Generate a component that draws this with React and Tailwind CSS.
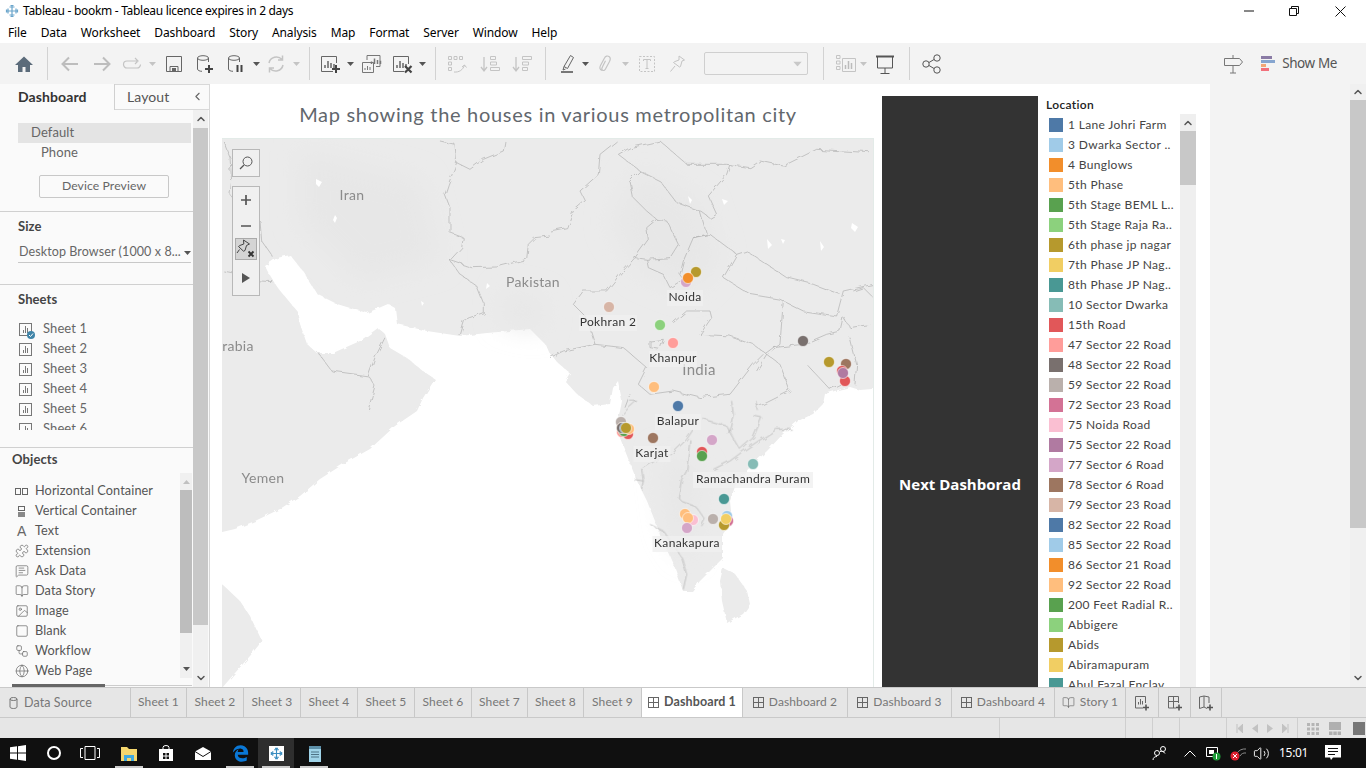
import {
  BookOpen, ChevronDown, ChevronLeft, ChevronUp, Globe, Image, MessageSquareText, Puzzle, Square, Volume2, Workflow,
} from 'lucide-react';
import { FaEdgeLegacy } from 'react-icons/fa6';

const MENU = ['File', 'Data', 'Worksheet', 'Dashboard', 'Story', 'Analysis', 'Map', 'Format', 'Server', 'Window', 'Help'];

const LEGEND = [
  ['1 Lane Johri Farm', '#4e79a7'],
  ['3 Dwarka Sector ..', '#a0cbe8'],
  ['4 Bunglows', '#f28e2b'],
  ['5th Phase', '#ffbe7d'],
  ['5th Stage BEML L..', '#59a14f'],
  ['5th Stage Raja Ra..', '#8cd17d'],
  ['6th phase jp nagar', '#b6992d'],
  ['7th Phase JP Nag..', '#f1ce63'],
  ['8th Phase JP Nag..', '#499894'],
  ['10 Sector Dwarka', '#86bcb6'],
  ['15th Road', '#e15759'],
  ['47 Sector 22 Road', '#ff9d9a'],
  ['48 Sector 22 Road', '#79706e'],
  ['59 Sector 22 Road', '#bab0ac'],
  ['72 Sector 23 Road', '#d37295'],
  ['75 Noida Road', '#fabfd2'],
  ['75 Sector 22 Road', '#b07aa1'],
  ['77 Sector 6 Road', '#d4a6c8'],
  ['78 Sector 6 Road', '#9d7660'],
  ['79 Sector 23 Road', '#d7b5a6'],
  ['82 Sector 22 Road', '#4e79a7'],
  ['85 Sector 22 Road', '#a0cbe8'],
  ['86 Sector 21 Road', '#f28e2b'],
  ['92 Sector 22 Road', '#ffbe7d'],
  ['200 Feet Radial R..', '#59a14f'],
  ['Abbigere', '#8cd17d'],
  ['Abids', '#b6992d'],
  ['Abiramapuram', '#f1ce63'],
  ['Abul Fazal Enclav..', '#499894'],
];

// page coordinates of the marks, drawn back to front
const DOTS = [
  [696, 271, '#b6992d'], [686, 281, '#d4a6c8'], [688, 277, '#f28e2b'],
  [609, 306, '#d7b5a6'], [660, 324, '#8cd17d'], [673, 342, '#ff9d9a'], [654, 386, '#ffbe7d'], [678, 405, '#4e79a7'],
  [803, 340, '#79706e'], [829, 361, '#b6992d'], [846, 363, '#9d7660'], [845, 380, '#e15759'], [842, 370, '#e15759'], [843, 372, '#b07aa1'],
  [621, 421, '#bab0ac'], [622, 431, '#ff9d9a'], [628, 433, '#e15759'], [624, 430, '#59a14f'], [622, 427, '#f28e2b'], [622, 427, '#79706e'], [625, 427, '#4e79a7'], [629, 428, '#ffbe7d'], [626, 427, '#b6992d'],
  [653, 437, '#9d7660'], [712, 439, '#d4a6c8'], [702, 451, '#e15759'], [702, 455, '#59a14f'], [753, 463, '#86bcb6'], [724, 498, '#499894'],
  [693, 519, '#fabfd2'], [685, 513, '#ffbe7d'], [688, 517, '#ffbe7d'], [687, 527, '#d4a6c8'], [713, 518, '#bab0ac'],
  [727, 515, '#a0cbe8'], [728, 520, '#d37295'], [724, 524, '#b6992d'], [726, 518, '#f1ce63'],
];

const LABELS = [
  ['Noida', 685, 297, 36], ['Pokhran 2', 608, 322, 58], ['Khanpur', 673, 358, 48], ['Balapur', 678, 421, 46],
  ['Karjat', 652, 453, 37], ['Ramachandra Puram', 753, 479, 120], ['Kanakapura', 687, 543, 69],
];

const SHEET_TABS = [
  ['Sheet 1', 'w-[56px]'], ['Sheet 2', 'w-[57px]'], ['Sheet 3', 'w-[57px]'], ['Sheet 4', 'w-[57px]'], ['Sheet 5', 'w-[57px]'],
  ['Sheet 6', 'w-[57px]'], ['Sheet 7', 'w-[56px]'], ['Sheet 8', 'w-[56px]'], ['Sheet 9', 'w-[58px]'],
];

function Ico({ children, className = '', w = 22, h = 22 }) {
  return (
    <svg width={w} height={h} viewBox={`0 0 ${w} ${h}`} fill="none" className={`shrink-0 ${className}`}>
      {children}
    </svg>
  );
}

function Caret({ className = '', color = '#555' }) {
  return (
    <svg width="7" height="4" viewBox="0 0 7 4" className={`shrink-0 ${className}`}>
      <path d="M0 0h7L3.5 4z" fill={color} />
    </svg>
  );
}

function Sep({ className = '' }) {
  return <div className={`w-px h-[33px] bg-[#d2d2d2] shrink-0 ${className}`} />;
}

function Plus({ x = 15, y = 16 }) {
  return <path d={`M${x - 4} ${y}h8M${x} ${y - 4}v8`} stroke="#444" strokeWidth="2" />;
}

function Cylinder({ c = '#666' }) {
  return (
    <>
      <ellipse cx="9" cy="5" rx="5.5" ry="2.3" stroke={c} />
      <path d="M3.5 5v11c0 1.3 2 2.300 4.500 2.300M14.500 5v4" stroke={c} />
    </>
  );
}

function Bars({ c = '#666', x = 5, y = 14, s = 1 }) {
  return <path d={`M${x} ${y}v${-3 * s}M${x + 3} ${y}v${-7 * s}M${x + 6} ${y}v${-5 * s}M${x + 9} ${y}v${-4 * s}`} stroke={c} strokeWidth="1.500" />;
}

function Toolbar() {
  const off = '#c4c4c4';
  return (
    <div className="h-[41px] bg-[#f3f3f3] flex items-center pl-[13px] shrink-0">
      <Ico><path d="M11 3.500 2 12h3v7h4.500v-5h3v5H17v-7h3z" fill="#5b6b7a" /></Ico>
      <Sep className="ml-[12px]" />
      <Ico className="ml-[11px]"><path d="M19 11H4M10 4.500 3.500 11l6.500 6.500" stroke="#bdbdbd" strokeWidth="2" /></Ico>
      <Ico className="ml-[10px]"><path d="M3 11h15M12 4.500l6.500 6.500-6.500 6.500" stroke="#bdbdbd" strokeWidth="2" /></Ico>
      <Ico className="ml-[8px]"><path d="M16 8H6a3.500 3.500 0 0 0 0 7h10a3.500 3.500 0 0 0 3.500-3.500M14 5l3 3-3 3" stroke={off} strokeWidth="1.200" /></Ico>
      <Caret className="ml-[6px]" color="#c4c4c4" />
      <Ico className="ml-[7px]"><path d="M3.500 3.500h15v15h-15zM7 18.500v-5h8v5" stroke="#666" /><path d="M9 15h4v3.500H9z" fill="#666" /></Ico>
      <Ico className="ml-[9px]"><Cylinder /><Plus x={15} y={16} /></Ico>
      <Ico className="ml-[9px]"><Cylinder /><path d="M12.500 12v7M16.500 12v7" stroke="#444" strokeWidth="2" /></Ico>
      <Caret className="ml-[6px]" />
      <Ico className="ml-[5px]"><path d="M4 10a7.500 7.500 0 0 1 13-3.500M18 12a7.500 7.500 0 0 1-13 3.500M17.500 2.500v4.500H13M4.500 19.500V15H9" stroke={off} strokeWidth="1.500" /></Ico>
      <Caret className="ml-[6px]" color="#c4c4c4" />
      <Sep className="ml-[9px]" />
      <Ico className="ml-[10px]"><path d="M13 18.500H1.500v-15h15V10" stroke="#666" /><Bars x={5} y={15} /><Plus x={16} y={16} /></Ico>
      <Caret className="ml-[5px]" />
      <Ico className="ml-[6px]"><path d="M7 7V2.500h13v11h-4" stroke="#777" /><path d="M2.500 9.500h11v10h-11z" stroke="#777" fill="#f3f3f3" /><Bars x={11.500} y={11} c="#777" s={0.8} /><path d="M5 17v-2M7.500 17v-4M10 17v-3" stroke="#777" /></Ico>
      <Ico className="ml-[10px]"><path d="M12 18.500H1.500v-15h15V11" stroke="#666" /><Bars x={5} y={15} /><path d="M13 13l6.500 6.500M19.500 13 13 19.500" stroke="#444" strokeWidth="2.200" /></Ico>
      <Caret className="ml-[5px]" />
      <Sep className="ml-[9px]" />
      <Ico className="ml-[10px]"><path d="M2.500 3.500h3v3h-3zM8 3.500h3v3H8zM13.500 3.500h3v3h-3zM2.500 9h3v3h-3zM2.500 14.500h3v3h-3z" stroke={off} /><path d="M8 19c5 .5 9-2 10.500-7M18.500 12l2 2.500M18.500 12 16 14" stroke={off} /></Ico>
      <Ico className="ml-[11px]"><path d="M5 4v13M2 14l3 4 3-4" stroke={off} strokeWidth="1.300" /><path d="M11.500 3.500h5v3h-5zM11.500 9h6v3h-6zM11.500 14.500h9v3h-9z" stroke={off} /></Ico>
      <Ico className="ml-[10px]"><path d="M5 4v13M2 14l3 4 3-4" stroke={off} strokeWidth="1.300" /><path d="M11.500 3.500h9v3h-9zM11.500 9h6v3h-6zM11.500 14.500h5v3h-5z" stroke={off} /></Ico>
      <Sep className="ml-[12px]" />
      <Ico className="ml-[11px]"><path d="M13.500 2.500l3 2-6 11-3.500-2zM7 13.500l-1 3.500 2.500-1" stroke="#666" /><path d="M4 19h12" stroke="#777" strokeWidth="2" /></Ico>
      <Caret className="ml-[3px]" />
      <Ico className="ml-[5px]"><path d="M8 17.500c-2.500-1-2.500-3-1.500-5L10.500 5c1-2 3-2.500 4.500-1.500s1.500 3 .5 5l-4 7.500c-.8 1.500-2 1.800-3 1.200s-.8-2 0-3.400l3-6" stroke={off} strokeWidth="1.200" /></Ico>
      <Caret className="ml-[6px]" color="#c4c4c4" />
      <Ico className="ml-[7px]"><path d="M3.500 3.500h15v15h-15z" stroke={off} strokeDasharray="2 1.500" /><path d="M7.500 8V6.500h7V8M11 6.500v9M9.500 15.500h3" stroke={off} /></Ico>
      <Ico className="ml-[8px]"><path d="M13 3l5.500 4-2.500 1-1.500 5.500-1 .5-6-4.500 1-.8 4.500-1.700zM9 13l-4.500 5.500" stroke={off} /></Ico>
      <div className="ml-[16px] w-[104px] h-[23px] border border-[#cfcfcf] rounded-[2px] bg-[#f3f3f3] flex items-center justify-end pr-[3px] shrink-0">
        <Caret color="#c8c8c8" className="scale-125 mr-[3px]" />
      </div>
      <Sep className="ml-[15px]" />
      <Ico className="ml-[11px]"><path d="M1.500 2.500h3.500v3H1.500zM1.500 8h3.500v3H1.500zM1.500 13.500h3.500v3H1.500zM7.500 5.500h13v13h-13z" stroke={off} /><path d="M10.500 16v-4M13.500 16V8M16.500 16v-6" stroke="#bbb" strokeWidth="1.500" /></Ico>
      <Caret className="ml-[3px]" color="#c4c4c4" />
      <Ico className="ml-[7px]"><path d="M2 3.500h18" stroke="#555" strokeWidth="2" /><path d="M3.500 4v11h15V4M11 15v5M6.500 20.500h9" stroke="#555" /></Ico>
      <Sep className="ml-[13px]" />
      <Ico className="ml-[11px]"><circle cx="5" cy="11" r="3.200" stroke="#555" /><circle cx="16" cy="5" r="3.200" stroke="#555" /><circle cx="16" cy="17" r="3.200" stroke="#555" /><path d="M8 9.500l5-3M8 12.500l5 3" stroke="#555" /></Ico>
      <div className="flex-1" />
      <Ico className="translate-x-[1px]"><path d="M2.500 5.500h15l3 3.500-3 3.500h-15zM11 2v3.500M11 12.500V20M8 20h6" stroke="#777" /></Ico>
      <Ico w={15} h={16} className="ml-[18px]">
        <path d="M0 1.500h11" stroke="#8a7ba5" strokeWidth="3" />
        <path d="M0 5.500h14" stroke="#86a5cf" strokeWidth="3" />
        <path d="M0 9.500h5" stroke="#f2a777" strokeWidth="3" />
        <path d="M0 13.500h8" stroke="#f2707b" strokeWidth="3" />
      </Ico>
      <span className="ml-[6px] mr-[29px] text-[13.500px] text-[#555] font-['Noto_Sans',sans-serif] tracking-[-0.4px]">Show Me</span>
    </div>
  );
}

function SheetIcon({ check }) {
  return (
    <span className="relative w-[13px] h-[13px] border border-[#777] shrink-0 flex items-end justify-center gap-[1px] pb-[2px]">
      <span className="w-px h-[3px] bg-[#777]" />
      <span className="w-px h-[7px] bg-[#777]" />
      <span className="w-px h-[5px] bg-[#777]" />
      {check && (
        <span className="absolute -right-[4px] -bottom-[4px] w-[8px] h-[8px] rounded-full bg-[#3f84a8] flex items-center justify-center">
          <Ico w={6} h={6}><path d="M1 3l1.500 1.500L5 1.500" stroke="#fff" /></Ico>
        </span>
      )}
    </span>
  );
}

function Objects() {
  const ic = { size: 14, strokeWidth: 1.2, color: '#666' };
  const rows = [
    ['Horizontal Container', <span className="flex gap-px" key="h"><span className="w-[6px] h-[7px] border border-[#666]" /><span className="w-[6px] h-[7px] border border-[#666]" /></span>],
    ['Vertical Container', <span className="flex flex-col gap-px ml-[3px]" key="v"><span className="w-[7px] h-[5px] border border-[#666]" /><span className="w-[7px] h-[5px] bg-[#888]" /></span>],
    ['Text', <span className="text-[14px] leading-none text-[#666] font-['Liberation_Sans',sans-serif] ml-[2px]" key="t">A</span>],
    ['Extension', <Puzzle {...ic} key="e" />],
    ['Ask Data', <MessageSquareText {...ic} key="a" />],
    ['Data Story', <BookOpen {...ic} key="d" />],
    ['Image', <Image {...ic} key="i" />],
    ['Blank', <Square {...ic} key="b" />],
    ['Workflow', <Workflow {...ic} key="w" />],
    ['Web Page', <Globe {...ic} key="p" />],
  ];
  return (
    <div className="flex h-[205px]">
      <div className="w-[180px] pt-[8px] pl-[15px] text-[12.700px]">
        {rows.map(([name, icon]) => (
          <div key={name} className="h-[20px] flex items-center">
            <span className="w-[20px] flex items-center">{icon}</span>
            <span className="text-[#555]">{name}</span>
          </div>
        ))}
      </div>
      <div className="w-[12px] bg-[#f0f0f0] flex flex-col items-center">
        <div className="h-[17px] flex items-center"><Caret color="#c0c0c0" className="rotate-180" /></div>
        <div className="w-full h-[143px] bg-[#bdbdbd]" />
        <div className="mt-[34px]"><Caret /></div>
      </div>
    </div>
  );
}

function LeftPanel() {
  return (
    <div className="w-[210px] shrink-0 flex flex-col bg-[#fafafa] border-r border-[#d8d8d8] text-[13px] font-['Lato',sans-serif] tracking-[0.1px]">
      <div className="h-[26px] flex shrink-0">
        <div className="w-[115px] pl-[18px] pb-[2px] flex items-center text-[14px] font-bold text-[#333] border-r border-[#d0d0d0]">Dashboard</div>
        <div className="flex-1 flex items-center pl-[12px] pb-[2px] text-[14px] text-[#555] border-b border-t border-[#d8d8d8] justify-between pr-[5px]">
          Layout
          <ChevronLeft size={13} color="#666" />
        </div>
      </div>
      <div className="flex flex-1 min-h-0">
        <div className="w-[193px] pt-[13px] flex flex-col overflow-hidden">
          <div className="ml-[18px] w-[173px] h-[20px] bg-[#e4e4e4] pl-[13px] flex items-center text-[#666]">Default</div>
          <div className="h-[20px] pl-[41px] flex items-center text-[#666]">Phone</div>
          <div className="mt-[12px] ml-[39px] w-[130px] h-[23px] border border-[#c8c8c8] rounded-[2px] flex items-center justify-center text-[12.200px] text-[#666]">Device Preview</div>
          <div className="mt-[13px] h-px bg-[#d0d0d0]" />
          <div className="mt-[6px] h-[18px] ml-[18px] flex items-center font-bold text-[#444]">Size</div>
          <div className="mt-[5px] ml-[18px] w-[173px] h-[22px] pt-[2px] border-b border-[#c8c8c8] flex items-center justify-between pl-[1px] pr-[0px] text-[#666]">
            <span className="text-[12.500px]">Desktop Browser (1000 x 8...</span>
            <Caret />
          </div>
          <div className="mt-[21px] h-px bg-[#d0d0d0] shrink-0" />
          <div className="mt-[6px] h-[18px] ml-[18px] flex items-center font-bold text-[#444] shrink-0">Sheets</div>
          <div className="mt-[10px] h-[111px] overflow-hidden shrink-0 pl-[19px]">
            {['Sheet 1', 'Sheet 2', 'Sheet 3', 'Sheet 4', 'Sheet 5', 'Sheet 6'].map((s, i) => (
              <div key={s} className="h-[20px] flex items-center gap-[11px] text-[#666]">
                <SheetIcon check={i === 0} />
                <span>{s}</span>
              </div>
            ))}
          </div>
          <div className="mt-[17px] h-px bg-[#d0d0d0] shrink-0" />
          <div className="mt-[3px] h-[18px] ml-[12px] flex items-center font-bold text-[#444] shrink-0">Objects</div>
          <div className="mt-[4px] shrink-0"><Objects /></div>
          <div className="mt-[6px] ml-[12px] w-[180px] h-[3px] flex items-center shrink-0">
            <div className="w-[93px] h-[3px] bg-[#666]" />
            <div className="flex-1 h-px bg-[#ccc]" />
          </div>
        </div>
        <div className="w-[15px] bg-[#f0f0f0] flex flex-col items-center">
          <div className="h-[18px] flex items-center"><ChevronUp size={12} strokeWidth={3} color="#555" /></div>
          <div className="w-full h-[497px] bg-[#c8c8c8]" />
          <div className="flex-1" />
          <div className="h-[18px] flex items-center"><ChevronDown size={12} strokeWidth={3} color="#555" /></div>
        </div>
      </div>
    </div>
  );
}

function MapView() {
  const line = { fill: 'none', stroke: '#adadad', strokeWidth: 2, strokeLinejoin: 'round' };
  return (
    <div className="relative flex-1 border-t border-r border-[#e3ebe8] overflow-hidden">
      <svg width="652" height="549" viewBox="222 138 652 549" className="block">
        <defs>
          <filter id="rough" x="-5%" y="-5%" width="110%" height="110%">
            <feTurbulence type="fractalNoise" baseFrequency=".11" numOctaves="2" seed="4" />
            <feDisplacementMap in="SourceGraphic" scale="6" />
          </filter>
          <filter id="coast" x="-2%" y="-2%" width="104%" height="104%">
            <feTurbulence type="fractalNoise" baseFrequency=".16" numOctaves="2" seed="9" />
            <feDisplacementMap in="SourceGraphic" scale="4" />
          </filter>
          <filter id="soft" x="-30%" y="-30%" width="160%" height="160%">
            <feGaussianBlur stdDeviation="13" />
          </filter>
        </defs>
        <g filter="url(#coast)">
          <path
            fill="#ebebeb"
            d="M210 125H885V387L860 389 850 386 838 389 825 393 823 403 813 413 798 420 783 433 767 450 753 463 737 480 730 500 732 520 723 533 723 557 713 567 700 580 692 590 683 590 675 567 663 540 647 500 637 480 620 437 617 420 620 410 622 400 618 380 613 387 610 403 593 405 577 393 565 380 570 372 558 362 548 350 545 343 530 328 487 332 460 335 427 330 397 323 395 307 388 303 367 312 337 303 317 293 303 270 290 254 277 257 265 265 270 275 278 287 297 310 300 323 307 343 317 352 333 352 360 340 378 327 385 333 390 347 407 357 423 370 435 378 423 397 417 410 395 425 370 448 345 462 320 478 300 495 280 508 255 520 235 528 210 534Z"
          />
          <path fill="#ebebeb" d="M210 575 222 583 240 600 250 615 262 640 250 655 235 672 222 687 210 700ZM723 567 735 573 747 590 750 603 743 613 727 622 722 600 720 580Z" />
        </g>
        <path filter="url(#soft)" fill="#e7e7e7" d="M640 170 700 200 720 260 690 290 640 270 610 220ZM300 150 420 180 440 260 360 280 300 220ZM660 450 700 470 690 560 670 530ZM505 290 545 300 540 330 500 320Z" />
        <path fill="#fff" d="M316 178 322 181 319 186 316 183ZM335 214 337 217 335 222 333 219ZM421 300 424 302 422 305ZM487 282 490 285 486 288ZM767 238 772 244 768 248ZM852 222 858 226 855 231 851 227ZM781 238 785 239 783 243ZM820 240 824 246 821 250ZM688 195 692 199 690 203ZM722 198 728 200 724 204Z" />
        <g filter="url(#rough)">
          <g transform="translate(220 130) scale(.3333)" {...line}>
            <path d="M10 30 30 80 35 150 30 190 60 230 120 270 125 330 160 380" />
            <path d="M660 30 705 40 710 95 685 160 675 190 690 230 690 305 730 320 725 350 690 388 720 430 770 465 790 515 790 545 735 565 720 615" />
            <path d="M855 30 850 60 790 85 750 115 710 95" />
            <path d="M690 388 755 410 830 408 920 385 925 340 945 320 990 315" />
            <path d="M10 420 60 430 120 450 160 452" />
            <path d="M290 660 335 720 445 735 465 765 445 835" />
            <path d="M445 735 465 680 495 620" />
          </g>
          <g transform="translate(550 130) scale(.3333)" {...line}>
            <path d="M0 300 50 290 70 240 105 210 90 180 145 130 150 70 200 30" />
            <path d="M205 70 240 50 330 30 410 100 530 100 600 110 630 90 700 105 800 55 960 65" />
            <path d="M205 70 270 120 330 150 380 215 450 240 480 262 500 250 475 195 530 130 540 100" />
            <path d="M270 120 240 150 250 200 290 240 320 265 350 270 385 340 360 380 290 385 255 380" />
            <path d="M320 265 290 290 295 325 255 380 210 430 170 480 100 480 70 520 110 560 135 640 40 660 0 680" />
            <path d="M430 320 480 310 560 370 520 440 600 490 690 505 760 540 860 555 880 480 970 460" />
            <path d="M560 370 590 360 650 400 710 440 790 460 870 490" />
            <path d="M450 240 470 310 430 320 400 390 390 430 400 445 360 470" />
            <path d="M290 385 295 410 340 430 360 470" />
            <path d="M370 575 410 540 480 540 485 560 450 610 540 615 610 640 650 670 690 640 700 510" />
            <path d="M135 640 220 650 290 710 265 760 300 790 370 780 450 800 540 790 610 700 640 670" />
            <path d="M300 630 340 625 330 655 300 650Z" />
            <path d="M770 700 840 775 870 760" />
            <path d="M670 650 760 640 830 610 870 600 880 555" />
            <path d="M880 560 900 590 960 580M910 480 940 470 970 500M900 620 920 700 915 760" />
            <path d="M620 720 650 670 690 700 720 780 620 830M225 830 240 790" />
          </g>
          <g transform="translate(550 400) scale(.3333)" {...line}>
            <path d="M420 115 410 210 395 235 385 290 400 305 440 320 465 355 455 375" />
            <path d="M300 370 340 390 395 470 410 520 400 565" />
            <path d="M490 205 540 180 580 150 625 120 680 85 725 85" />
            <path d="M460 55 530 75 570 145 610 110 635 50 610 45" />
            <path d="M545 0 550 40 535 100M620 0 625 30" />
            <path d="M250 235 280 240 275 205 330 170 365 160 410 115 430 85" />
            <path d="M275 265 280 240M240 0 260 0 215 40" />
          </g>
        </g>
        <g className="font-['Lato',sans-serif]" fontSize="14" fill="#8b8b8b" textAnchor="middle" letterSpacing=".3">
          <text x="352" y="199">Iran</text>
          <text x="533" y="286">Pakistan</text>
          <text x="238" y="350">rabia</text>
          <text x="263" y="482">Yemen</text>
          <text x="699" y="374" fontSize="15">India</text>
        </g>
        {DOTS.map(([x, y, c], i) => (
          <circle key={i} cx={x} cy={y} r="5.500" fill={c} stroke="#fff" strokeOpacity=".55" />
        ))}
        <g className="font-['Lato',sans-serif]" fontSize="12" fill="#333" textAnchor="middle" letterSpacing=".35">
          {LABELS.map(([t, x, y, w]) => (
            <g key={t}>
              <rect x={x - w / 2} y={y - 8} width={w} height="16" fill="#f0f0f0" fillOpacity=".8" />
              <text x={x} y={y + 3}>{t}</text>
            </g>
          ))}
        </g>
      </svg>
      {/* map tools */}
      <div className="absolute left-[10px] top-[10px] w-[28px] flex flex-col">
        <div className="h-[28px] bg-[#f0f0f0] border border-[#b8b8b8] flex items-center justify-center">
          <Ico w={14} h={14}><circle cx="8.500" cy="5.500" r="4.500" stroke="#555" /><path d="M5 9l-4 4" stroke="#555" strokeWidth="1.300" /></Ico>
        </div>
        <div className="mt-[9px] h-[110px] bg-[#f0f0f0] border border-[#b8b8b8] flex flex-col items-center">
          <div className="h-[26px] flex items-center"><Ico w={12} h={12}><path d="M1 6h10M6 1v10" stroke="#555" strokeWidth="1.700" /></Ico></div>
          <div className="h-[25px] flex items-center"><Ico w={12} h={12}><path d="M1 6h10" stroke="#666" strokeWidth="1.700" /></Ico></div>
          <div className="w-[22px] h-[22px] bg-[#d4d4d4] border border-[#aaa] flex items-center justify-center">
            <Ico w={20} h={20}>
              <path d="M7.500 1l6 4-3 1.500-1.500 5-1.500.7L2.500 7.500l1.300-1 4-1.500zM3.500 10.500 1 14" stroke="#444" />
              <path d="M12.500 12.500l5 5M17.500 12.500l-5 5" stroke="#333" strokeWidth="1.800" />
            </Ico>
          </div>
          <div className="flex-1 flex items-center"><Ico w={8} h={10}><path d="M0 0l8 5-8 5z" fill="#555" /></Ico></div>
        </div>
      </div>
    </div>
  );
}

function Legend() {
  return (
    <div className="ml-[8px] w-[150px] shrink-0 flex flex-col font-['Lato',sans-serif] text-[12px] tracking-[0.35px] overflow-hidden">
      <div className="h-[18px] mt-[12px] pb-[1px] flex items-center font-semibold text-[#222] shrink-0">Location</div>
      <div className="flex flex-1 min-h-0">
        <div className="w-[134px] shrink-0 pl-[3px] pt-[1px] overflow-hidden">
          {LEGEND.map(([name, c]) => (
            <div key={name} className="h-[20px] flex items-center gap-[5px] whitespace-nowrap text-[#444]">
              <span className="w-[14px] h-[14px] shrink-0" style={{ background: c }} />
              {name}
            </div>
          ))}
        </div>
        <div className="w-[16px] shrink-0 bg-[#efefef] flex flex-col items-center">
          <div className="h-[17px] flex items-center"><ChevronUp size={12} strokeWidth={3} color="#555" /></div>
          <div className="w-full h-[54px] bg-[#c8c8c8]" />
        </div>
      </div>
    </div>
  );
}

function Canvas() {
  return (
    <div className="flex-1 flex min-w-0">
      <div className="w-[1000px] bg-white shrink-0 flex pl-[12px]">
        <div className="w-[652px] shrink-0 flex flex-col">
          <div className="h-[54px] shrink-0 flex items-center justify-center pt-[6px] text-[20px] text-[#62676d] font-['Lato',sans-serif] tracking-[0.7px]">
            Map showing the houses in various metropolitan city
          </div>
          <MapView />
        </div>
        <div className="ml-[8px] mt-[12px] w-[156px] shrink-0 bg-[#333] flex items-center justify-center pt-[185px] text-white font-bold text-[15px] font-['Open_Sans',sans-serif]">
          Next Dashborad
        </div>
        <Legend />
      </div>
      <div className="flex-1 bg-[#f3f3f3]" />
      <div className="w-[16px] bg-[#f0f0f0] flex flex-col items-center shrink-0">
        <div className="h-[16px] flex items-center"><ChevronUp size={12} strokeWidth={3} color="#555" /></div>
        <div className="w-full h-[428px] bg-[#c8c8c8]" />
        <div className="flex-1" />
        <div className="h-[18px] flex items-center"><ChevronDown size={12} strokeWidth={3} color="#555" /></div>
      </div>
    </div>
  );
}

function GridIcon() {
  return (
    <span className="w-[11px] h-[11px] border border-[#666] shrink-0 relative">
      <span className="absolute left-[4px] top-0 w-px h-full bg-[#666]" />
      <span className="absolute left-0 top-[4px] h-px w-full bg-[#666]" />
    </span>
  );
}

function TabBar() {
  const dash = 'h-full border-r border-[#c8c8c8] flex items-center justify-center gap-[5px] text-[#777]';
  return (
    <div className="h-[31px] shrink-0 bg-[#e6e6e6] border-t border-b border-[#c9c9c9] flex font-['Lato',sans-serif] text-[12px] tracking-[0.1px]">
      <div className="w-[131px] h-full border-r border-[#c8c8c8] pl-[9px] pt-[1px] flex items-center gap-[6px] text-[12.500px] text-[#777]">
        <Ico w={9} h={12}><ellipse cx="4.500" cy="2" rx="3.500" ry="1.500" stroke="#777" /><path d="M1 2v8c0 .8 1.500 1.500 3.500 1.500S8 10.800 8 10V2" stroke="#777" /></Ico>
        Data Source
      </div>
      {SHEET_TABS.map(([s, w]) => (
        <div key={s} className={`${w} h-full border-r border-[#c8c8c8] pb-[1px] flex items-center justify-center text-[#777]`}>{s}</div>
      ))}
      <div className={`${dash} w-[101px] bg-white`}>
        <GridIcon />
        <span className="font-bold text-[12.500px] text-[#555]">Dashboard 1</span>
      </div>
      <div className={`${dash} w-[105px] pb-[1px]`}><GridIcon />Dashboard 2</div>
      <div className={`${dash} w-[104px] pb-[1px]`}><GridIcon />Dashboard 3</div>
      <div className={`${dash} w-[103px] pb-[1px]`}><GridIcon />Dashboard 4</div>
      <div className={`${dash} w-[71px] pb-[1px]`}><BookOpen size={13} strokeWidth={1.2} color="#666" />Story 1</div>
      <div className={`${dash} w-[33px]`}><Ico w={16} h={16}><path d="M9 13H1.500V1.500h10V8" stroke="#666" /><path d="M4.500 9.500V7M6.500 9.500V4M8.500 9.500V6" stroke="#666" /><path d="M12 9.500v6M9 12.500h6" stroke="#555" strokeWidth="1.600" /></Ico></div>
      <div className={`${dash} w-[32px]`}><Ico w={16} h={16}><path d="M9 13H1.500V1.500h10V8M1.500 6.500h10M6.500 1.500V13" stroke="#666" /><path d="M12 9.500v6M9 12.500h6" stroke="#555" strokeWidth="1.600" /></Ico></div>
      <div className={`${dash} w-[31px]`}><Ico w={16} h={16}><path d="M9 13.500 6 12l-4.500 1.500V2L6 1l5 1v6M6 1v11" stroke="#666" /><path d="M12 9.500v6M9 12.500h6" stroke="#555" strokeWidth="1.600" /></Ico></div>
    </div>
  );
}

function StatusBar() {
  return (
    <div className="h-[20px] shrink-0 bg-[#e6e6e6] flex">
      <div className="w-[1000px] h-full border-r border-[#cfcfcf]" />
      <div className="w-[126px] h-full border-r border-[#cfcfcf]" />
      <div className="w-[27px] h-full border-r border-[#cfcfcf]" />
      <div className="w-[27px] h-full border-r border-[#cfcfcf]" />
      <div className="w-[47px] h-full border-r border-[#cfcfcf]" />
      <div className="w-[71px] h-full border-r border-[#cfcfcf] flex items-center justify-center gap-[9px]">
        <Ico w={7} h={9}><path d="M1 0v9M7 0 2 4.500 7 9z" stroke="#c2c2c2" fill="#c2c2c2" /></Ico>
        <Ico w={6} h={9}><path d="M6 0 0 4.500 6 9z" fill="#c2c2c2" /></Ico>
        <Ico w={6} h={9}><path d="M0 0l6 4.500L0 9z" fill="#c2c2c2" /></Ico>
        <Ico w={7} h={9}><path d="M6 0v9M0 0l5 4.500L0 9z" stroke="#c2c2c2" fill="#c2c2c2" /></Ico>
      </div>
      <div className="flex items-center pl-[9px] gap-[10px]">
        <Ico w={12} h={13}><path d="M0 1h3v3H0zM4.500 1h3v3h-3zM9 1h3v3H9zM0 5.500h3v3H0zM4.500 5.500h3v3h-3zM9 5.500h3v3H9zM0 10h3v3H0zM4.500 10h3v3h-3zM9 10h3v3H9z" fill="#b5b5b5" /></Ico>
        <Ico w={12} h={13}><path d="M0 0h12v8H0zM0 9.500h3.500V13H0zM4.300 9.500h3.500V13H4.300zM8.600 9.500H12V13H8.600z" fill="#b0b0b0" /></Ico>
        <Ico w={12} h={13} className="ml-[2px]"><path d="M0 0h12v13H0z" fill="#777" /></Ico>
      </div>
    </div>
  );
}

function TaskItem({ children, active, open }) {
  return (
    <div className={`w-[36px] h-full relative flex items-center justify-center shrink-0 ${active ? 'bg-[#2e2e2e]' : ''}`}>
      {children}
      {open && <span className="absolute bottom-0 left-[4px] right-[4px] h-[2px] bg-[#ccc]" />}
    </div>
  );
}

function Snowflake({ size = 16, c = '#2f7fb5' }) {
  return (
    <svg width={size} height={size} viewBox="0 0 16 16" className="shrink-0">
      <rect width="16" height="16" fill="#fff" />
      <path d="M8 2v12M2 8h12M5.500 4h5M5.500 12h5M4 5.500v5M12 5.500v5M6.500 2.500h3M6.500 13.500h3M2.500 6.500v3M13.500 6.500v3" stroke={c} strokeWidth="1.200" />
    </svg>
  );
}

function Taskbar() {
  return (
    <div className="h-[30px] shrink-0 bg-[#101010] flex items-center">
      <div className="w-[36px] flex justify-center">
        <Ico w={16} h={16}><path d="M0 2.300 7 1.300V7.500H0zM8 1.200 16 0V7.500H8zM0 8.500H7V14.700L0 13.700zM8 8.500H16V16L8 14.800z" fill="#fff" /></Ico>
      </div>
      <TaskItem><span className="w-[14px] h-[14px] rounded-full border-2 border-white" /></TaskItem>
      <TaskItem><Ico w={20} h={14}><path d="M5 .5h10v13H5zM3 2.500H.5v9H3M17 2.500h2.500v9H17" stroke="#fff" /></Ico></TaskItem>
      <div className="ml-[3px]" />
      <TaskItem open><Ico w={16} h={15}><path d="M0 1h6l2 2h8v12H0z" fill="#f5d76e" /><path d="M3 15V9h10v6h-3v-3H6v3z" fill="#3fa9e0" /></Ico></TaskItem>
      <div className="ml-px" />
      <TaskItem><Ico w={14} h={16}><path d="M0 4h14v12H0z" fill="#fff" /><path d="M4 5V2.500a3 2 0 0 1 6 0V5" stroke="#fff" /><path d="M4 8h2.500v2.500H4zM7.500 8H10v2.500H7.500zM4 11.500h2.500V14H4zM7.500 11.500H10V14H7.500z" fill="#111" /></Ico></TaskItem>
      <div className="ml-px" />
      <TaskItem><Ico w={16} h={13}><path d="M0 4.500 8 0l8 4.500V13H0z" fill="#fff" /><path d="M0 4.500l8 5 8-5" stroke="#111" /></Ico></TaskItem>
      <div className="ml-px" />
      <TaskItem open><FaEdgeLegacy size={17} color="#0a78d7" /></TaskItem>
      <TaskItem active open><Snowflake size={15} c="#3a8dc0" /></TaskItem>
      <div className="ml-[2px]" />
      <TaskItem open><Ico w={15} h={18}><path d="M2 2h12v16H2z" fill="#9fd3e8" /><path d="M2 2h12v3H2z" fill="#5c8fa8" /><path d="M4 8h8M4 10.500h8M4 13h8" stroke="#4d7285" /></Ico></TaskItem>
      <div className="flex-1" />
      <Ico w={16} h={16}><circle cx="11" cy="4" r="2.500" stroke="#fff" /><circle cx="5" cy="8" r="2.500" stroke="#fff" /><path d="M1 15c0-2.500 2-3.500 4-3.500M8 6.500c2-.5 4 0 5 2" stroke="#fff" /></Ico>
      <Ico w={12} h={7} className="ml-[16px]"><path d="M.5 6.500 6 1l5.500 5.500" stroke="#fff" /></Ico>
      <Ico w={15} h={15} className="ml-[10px]"><path d="M.5 1.500h11v9H.5z" stroke="#fff" /><path d="M3 4h5v4H3z" fill="#fff" /><circle cx="10.500" cy="10.500" r="4" fill="#1f9d3a" /><path d="M10.500 8v5" stroke="#fff" /></Ico>
      <Ico w={17} h={15} className="ml-[9px]"><path d="M7 7a10 10 0 0 1 9-4M10 10a6 6 0 0 1 6-3" stroke="#8a8a8a" /><circle cx="5" cy="10" r="4.500" fill="#e02030" /><path d="M3 8l4 4M7 8l-4 4" stroke="#fff" /></Ico>
      <Volume2 size={17} color="#fff" strokeWidth={1.3} className="ml-[6px]" />
      <span className="ml-[9px] w-[26px] text-white text-[12px] font-['Noto_Sans',sans-serif] tracking-[-0.3px] whitespace-nowrap">15:01</span>
      <Ico w={16} h={16} className="ml-[20px] mr-[25px]"><path d="M0 0h16v12.500H8L6 15l-1-2.500H0z" fill="#fff" /><path d="M3 3.500h10M3 6.500h10M3 9.500h7" stroke="#111" /></Ico>
    </div>
  );
}

export default function App() {
  return (
    <div className="w-[1366px] h-[768px] flex flex-col overflow-hidden bg-white">
      <div className="h-[22px] shrink-0 flex items-center pl-[4px] font-['Noto_Sans',sans-serif]">
        <Snowflake size={16} c="#6aa5cb" />
        <span className="ml-[3px] text-[12px] text-black tracking-[-0.3px]">Tableau - bookm - Tableau licence expires in 2 days</span>
        <div className="flex-1" />
        <Ico w={10} h={10}><path d="M0 5h10" stroke="#111" /></Ico>
        <Ico w={10} h={10} className="ml-[35px]"><path d="M.5 2.500h7v7h-7zM2.500 2.500v-2h7v7h-2" stroke="#111" /></Ico>
        <Ico w={11} h={11} className="ml-[36px] mr-[20px]"><path d="M.5.5l10 10M10.500.5l-10 10" stroke="#111" /></Ico>
      </div>
      <div className="h-[21px] shrink-0 flex items-center pl-[8px] gap-[14px] text-[12px] text-black font-['Noto_Sans',sans-serif] tracking-[-0.12px]">
        {MENU.map((m) => <span key={m}>{m}</span>)}
      </div>
      <Toolbar />
      <div className="flex-1 flex min-h-0">
        <LeftPanel />
        <Canvas />
      </div>
      <TabBar />
      <StatusBar />
      <Taskbar />
    </div>
  );
}
